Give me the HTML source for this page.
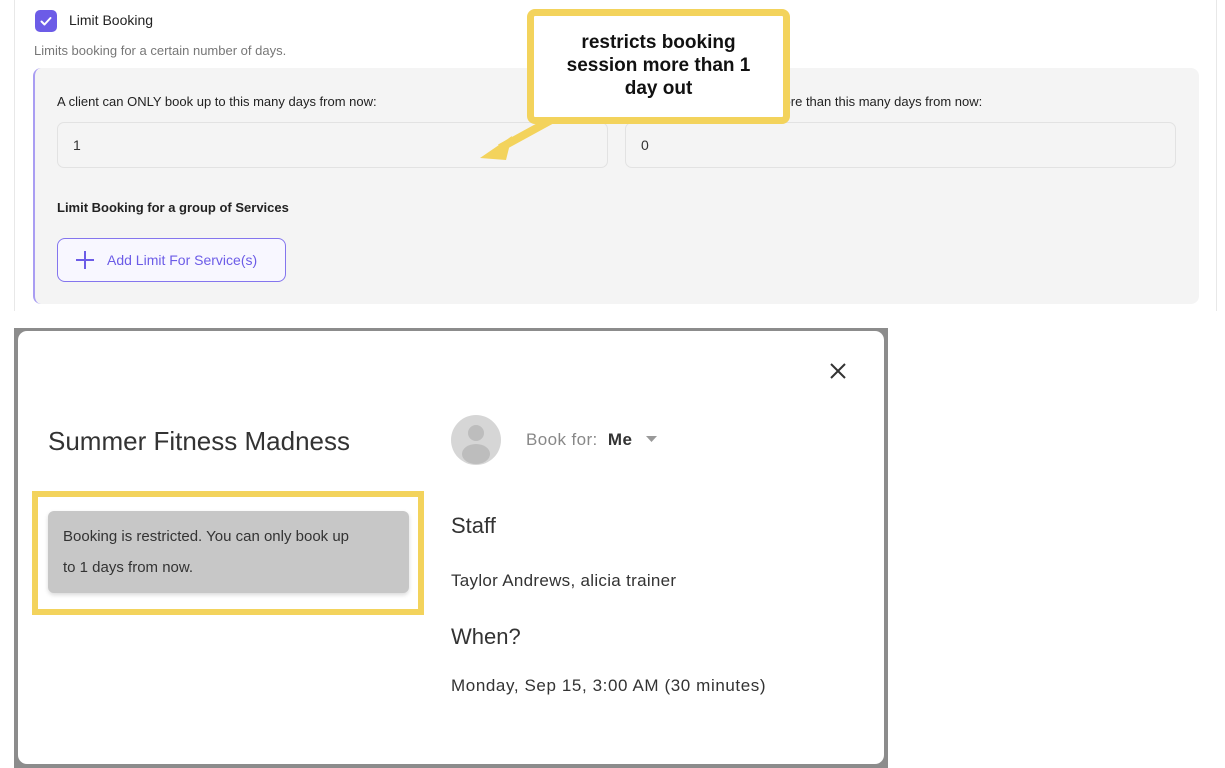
<!DOCTYPE html>
<html><head><meta charset="utf-8"><style>
*{box-sizing:border-box;margin:0;padding:0}
body{width:1225px;height:768px;background:#fff;font-family:"Liberation Sans",sans-serif;position:relative;overflow:hidden;color:#222}
.a{position:absolute}
</style></head><body>
<div class="a" style="left:14px;top:0;width:1px;height:311px;background:#e8e8e8"></div>
<div class="a" style="left:1216px;top:0;width:1px;height:311px;background:#e8e8e8"></div>
<div class="a" style="left:35px;top:10px;width:22px;height:22px;border-radius:5px;background:#6c5ce7"></div>
<svg class="a" style="left:35px;top:10px" width="22" height="22"><path d="M6.5 11.5l3 3 6-6.5" stroke="#fff" stroke-width="2" fill="none" stroke-linecap="round" stroke-linejoin="round"/></svg>
<div class="a" style="left:69px;top:12px;font-size:14px;color:#222">Limit Booking</div>
<div class="a" style="left:34px;top:43px;font-size:13px;color:#777">Limits booking for a certain number of days.</div>
<div class="a" style="left:33px;top:68px;width:1166px;height:236px;background:#f4f4f4;border-left:2px solid #a99df2;border-radius:8px"></div>
<div class="a" style="left:57px;top:94px;font-size:13px;color:#222">A client can ONLY book up to this many days from now:</div>
<div class="a" style="left:57px;top:122px;width:551px;height:46px;border:1px solid #e2e2e2;border-radius:7px;background:#f4f4f4;padding:14px 15px;font-size:14px;color:#333">1</div>
<div class="a" style="left:625px;top:122px;width:551px;height:46px;border:1px solid #e2e2e2;border-radius:7px;background:#f4f4f4;padding:14px 15px;font-size:14px;color:#333">0</div>
<div class="a" style="left:640px;top:94px;font-size:13px;color:#222">A client can NOT book more than this many days from now:</div>
<div class="a" style="left:57px;top:200px;font-size:13px;font-weight:bold;color:#222">Limit Booking for a group of Services</div>
<div class="a" style="left:57px;top:238px;width:229px;height:44px;border:1.5px solid #8475ee;border-radius:8px;background:#f8f7ff"></div>
<svg class="a" style="left:75px;top:250px" width="20" height="20"><path d="M10 1v18M1 10h18" stroke="#6c5ce7" stroke-width="2"/></svg>
<div class="a" style="left:107px;top:252px;font-size:14px;color:#6c5ce7">Add Limit For Service(s)</div>
<!-- callout -->
<svg class="a" style="left:470px;top:110px" width="100" height="60"><path d="M85 8 L30 38" stroke="#f3d35c" stroke-width="8"/><path d="M10 48 L42 26 L36 50 Z" fill="#f3d35c"/></svg>
<div class="a" style="left:527px;top:9px;width:263px;height:115px;border:7px solid #f3d35c;border-radius:8px;background:#fff;text-align:center;font-weight:bold;font-size:19px;line-height:23px;padding-top:15px;color:#111">restricts booking<br>session more than 1<br>day out</div>
<!-- modal -->
<div class="a" style="left:14px;top:328px;width:874px;height:440px;background:#8c8c8c"></div>
<div class="a" style="left:18px;top:331px;width:866px;height:433px;background:#fff;border-radius:9px"></div>
<svg class="a" style="left:828px;top:361px" width="20" height="20"><path d="M3 3l14 14M17 3L3 17" stroke="#333" stroke-width="2"/></svg>
<div class="a" style="left:48px;top:426px;font-size:26px;color:#333">Summer Fitness Madness</div>
<svg class="a" style="left:450px;top:414px" width="52" height="52"><circle cx="26" cy="26" r="25" fill="#d6d6d6"/><circle cx="26" cy="19" r="8" fill="#bdbdbd"/><ellipse cx="26" cy="40" rx="14" ry="10" fill="#bdbdbd"/></svg>
<div class="a" style="left:526px;top:430px;font-size:17px;color:#888;letter-spacing:.4px">Book for: &nbsp;<b style="color:#333;font-weight:bold">Me</b></div>
<svg class="a" style="left:645px;top:434px" width="14" height="10"><path d="M1 2h11l-5.5 6z" fill="#999"/></svg>
<div class="a" style="left:32px;top:491px;width:392px;height:124px;border:6px solid #f3d35c"></div>
<div class="a" style="left:48px;top:511px;width:361px;height:82px;background:#c7c7c7;border-radius:6px;box-shadow:0 2px 4px rgba(0,0,0,.15);padding:10px 45px 0 15px;font-size:15px;line-height:31px;color:#333">Booking is restricted. You can only book up to 1 days from now.</div>
<div class="a" style="left:451px;top:513px;font-size:22px;color:#333">Staff</div>
<div class="a" style="left:451px;top:571px;font-size:17px;color:#333;letter-spacing:.3px">Taylor Andrews, alicia trainer</div>
<div class="a" style="left:451px;top:624px;font-size:22px;color:#333">When?</div>
<div class="a" style="left:451px;top:676px;font-size:17px;color:#333;letter-spacing:.6px">Monday, Sep 15, 3:00 AM (30 minutes)</div>
</body></html>
